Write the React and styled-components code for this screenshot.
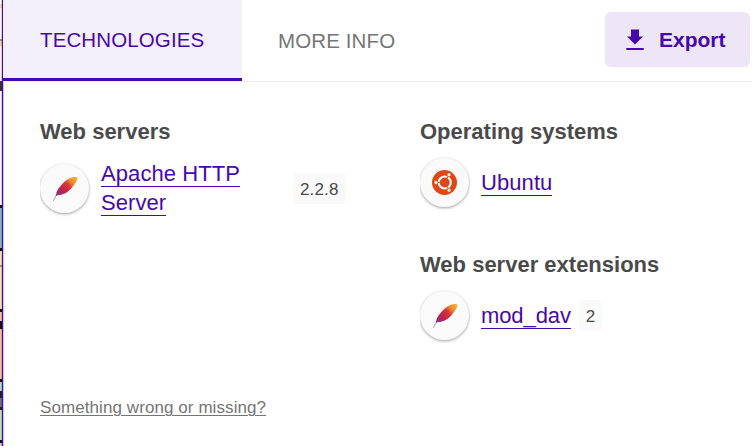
import React from "react";
import styled, { createGlobalStyle } from "styled-components";

const Global = createGlobalStyle`
  * { box-sizing: border-box; }
  body { margin: 0; background: #fff; overflow: hidden; font-family: "Liberation Sans", Arial, sans-serif; }
`;
const Window = styled.div`
  display: flex;
  width: 752px;
  height: 446px;
  overflow: hidden;
`;
const PageEdge = styled.div`
  flex: 0 0 2px;
  background: linear-gradient(
    #fff 0 4px, #e9dfa0 4px 8px, #fbfbf4 8px 39px, #999 39px 41px, #e5d98d 41px 46px,
    #f4f4f4 46px 81px, #333 81px 91px, #f5f5f5 91px 205px, #111 205px 208px,
    #7ebcb5 208px 248px, #111 248px 251px, #efe6a6 251px 265px, #99916a 265px 267px,
    #efe6a6 267px 309px, #111 309px 312px, #efc28b 312px 321px, #111 321px 329px,
    #efc28b 329px 379px, #111 379px 382px, #a5dfbe 382px 391px, #222 391px 398px,
    #65756b 398px 407px, #222 407px 410px, #b6e3b2 410px 440px, #111 440px 443px, #c8c8c8 443px
  );
`;
const Panel = styled.main`
  flex: 1;
  display: flex;
  flex-direction: column;
  border-left: 1px solid #4608ad;
  box-shadow: 0 0 1px #4608ad, inset 1px 0 #4608ad40;
`;
const Header = styled.header`
  display: flex;
  height: 82px;
  flex: none;
  background: linear-gradient(#eee, #eee) 0 81px / 100% 1px no-repeat;
`;
const Tab = styled.button`
  width: ${(p) => p.$width}px;
  height: 81px;
  border: 0;
  border-bottom: 3px solid ${(p) => (p.$active ? "#4608ad" : "transparent")};
  padding: ${(p) => (p.$active ? 2 : 3)}px 0 0 ${(p) => (p.$active ? 37 : 36)}px;
  text-align: left;
  background: ${(p) => (p.$active ? "#f4f0fb" : "transparent")};
  color: ${(p) => (p.$active ? "#4608ad" : "#757575")};
  font: 20.5px "Liberation Sans", Arial, sans-serif;
  letter-spacing: 0.12px;
`;
const ExportButton = styled.button`
  display: flex;
  align-items: center;
  gap: 13px;
  width: 145px;
  height: 55px;
  margin: 12px 2px 0 auto;
  padding: 0 0 0 19px;
  border: 0;
  border-radius: 6px;
  background: #ece6f6;
  color: #4608ad;
  font: bold 21px "Liberation Sans", Arial, sans-serif;
  span { padding-top: 1px; }
`;
const Content = styled.div`
  display: grid;
  grid-template-columns: 306px 306px;
  column-gap: 74px;
  padding: 35px 0 0 37px;
  height: 308px;
`;
const Group = styled.section`
  height: 133px;
`;
const Heading = styled.h2`
  margin: 0 0 12px;
  height: 29px;
  color: #4a4a4a;
  font-size: 22px;
  line-height: 29px;
  letter-spacing: 0;
`;
const Row = styled.div`
  display: flex;
  align-items: center;
  padding-top: ${(p) => (p.$tall ? 2 : 0)}px;
`;
const Logo = styled.span`
  display: grid;
  place-items: center;
  flex: none;
  width: 49px;
  height: 49px;
  margin-right: 12px;
  border-radius: 50%;
  background: #fafafa;
  box-shadow: 0 1px 3px rgba(0, 0, 0, 0.38);
  clip-path: inset(-4px -4px -4px 0);
`;
const Name = styled.a`
  width: ${(p) => (p.$wide ? "192px" : "auto")};
  margin-top: -1px;
  color: #4608ad;
  font-size: 22px;
  line-height: 29px;
  letter-spacing: ${(p) => (p.$tight ? -0.1 : 0.08)}px;
  span {
    border-bottom: 1px solid #4608ad;
    text-decoration: none;
  }
`;
const Version = styled.span`
  display: grid;
  place-items: center;
  height: 31px;
  margin-left: ${(p) => p.$gap}px;
  padding: 2px 7px 0;
  border-radius: 4px;
  background: #fafafa;
  color: #4a4a4a;
  font-size: 17px;
  letter-spacing: 0.15px;
`;
const Feedback = styled.a`
  margin: 8px 0 0 37px;
  color: #757575;
  font-size: 17px;
  line-height: 20px;
  letter-spacing: 0.08px;
  text-decoration: underline;
  text-underline-offset: 2px;
  text-decoration-thickness: 1px;
`;

const Feather = () => (
  <svg width="26" height="26" viewBox="0 0 26 26">
    <defs>
      <linearGradient id="plume" x1="3" y1="22" x2="24" y2="2" gradientUnits="userSpaceOnUse">
        <stop offset="0" stopColor="#8b5aa5" />
        <stop offset=".2" stopColor="#8e2f73" />
        <stop offset=".4" stopColor="#c92045" />
        <stop offset=".64" stopColor="#d83a38" />
        <stop offset=".8" stopColor="#f28b2f" />
        <stop offset="1" stopColor="#f6ad35" />
      </linearGradient>
    </defs>
    <path fill="url(#plume)" d="M4.4 16.8C5.4 13.5 9.1 8.7 13.7 4.8C17.4 1.2 22.8.2 24.9 1.3C26.4 2.7 24.1 6.7 20.8 10.6C17 15.6 13.4 18.8 5.4 19.3L3.6 20.5Z" />
    <path d="M1.3 25L3.6 20.3C7 15.8 11.5 11.2 17 7" fill="none" stroke="#873d82" strokeWidth=".9" opacity=".55" />
  </svg>
);
const UbuntuIcon = () => (
  <svg width="25" height="25" viewBox="0 0 100 100">
    <circle cx="50" cy="50" r="50" fill="#dd4814" />
    <circle cx="51" cy="50" r="24" fill="none" stroke="#fff" strokeWidth="8.5" />
    <path d="M50 50H18M50 50L67 20.5M50 50L67 79.5" stroke="#dd4814" strokeWidth="4" />
    <g fill="#fff" stroke="#dd4814" strokeWidth="3">
      <circle cx="16" cy="50" r="8" />
      <circle cx="68" cy="19" r="8" />
      <circle cx="68" cy="81" r="8" />
    </g>
  </svg>
);
const DownloadIcon = () => (
  <svg width="22" height="24" viewBox="0 0 22 24" fill="currentColor">
    <path d="M7 1.5h8v7h4L11 16.5 3 8.5h4zM2.3 20h17.4v2H2.3z" />
  </svg>
);

export default function App() {
  return (
    <>
      <Global />
      <Window>
        <PageEdge />
        <Panel>
          <Header>
            <Tab $active $width={239}>TECHNOLOGIES</Tab>
            <Tab $width={190}>MORE INFO</Tab>
            <ExportButton><DownloadIcon /><span>Export</span></ExportButton>
          </Header>
          <Content>
            <Group>
              <Heading>Web servers</Heading>
              <Row $tall>
                <Logo><Feather /></Logo>
                <Name $wide><span>Apache HTTP Server</span></Name>
                <Version $gap={0}>2.2.8</Version>
              </Row>
            </Group>
            <div>
              <Group>
                <Heading>Operating systems</Heading>
                <Row>
                  <Logo><UbuntuIcon /></Logo>
                  <Name><span>Ubuntu</span></Name>
                </Row>
              </Group>
              <Group>
                <Heading>Web server extensions</Heading>
                <Row>
                  <Logo><Feather /></Logo>
                  <Name $tight><span>mod_dav</span></Name>
                  <Version $gap={8}>2</Version>
                </Row>
              </Group>
            </div>
          </Content>
          <Feedback>Something wrong or missing?</Feedback>
        </Panel>
      </Window>
    </>
  );
}
